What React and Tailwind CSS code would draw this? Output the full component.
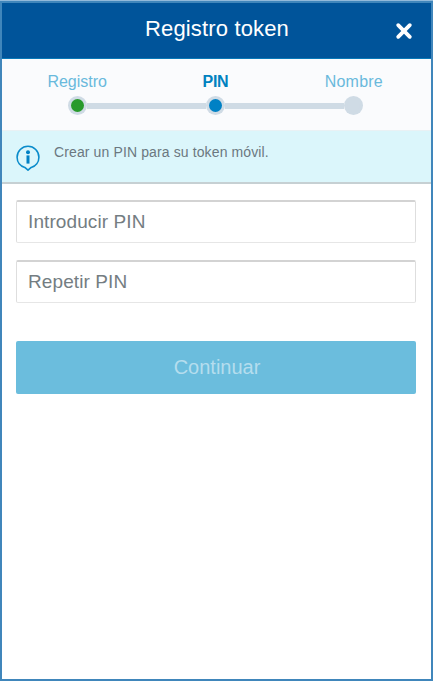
const steps = [
  { label: 'Registro', text: 'text-[#69b9dc]', dot: 'bg-[#289a2c]' },
  { label: 'PIN', text: 'font-bold text-[#0081c0] tracking-[-0.3px]', dot: 'bg-[#0081c5]' },
  { label: 'Nombre', text: 'text-[#69b9dc] tracking-[0.2px]', dot: 'bg-[#cfdbe5]' },
];

function Header() {
  return (
    <header className="flex h-14 items-center border-b border-[#0878b8] bg-[#00549a] pl-[40px] text-white">
      <h1 className="flex-1 pr-[3px] pb-[3px] text-center text-[22px] leading-7 tracking-[0.15px]">Registro token</h1>
      <button aria-label="Cerrar" className="mr-[18px] flex h-[18px] w-[18px] items-center justify-center">
        <svg viewBox="0 0 18 18" className="h-[18px] w-[18px]" fill="none" stroke="currentColor" strokeWidth="3.8" strokeLinecap="round">
          <path d="M3.2 3.2 14.8 14.8M14.8 3.2 3.2 14.8" />
        </svg>
      </button>
    </header>
  );
}

function Stepper() {
  return (
    <section className="h-[71px] bg-[#fafbfd] pt-[13px] pr-2 pl-[6px]">
      <ol className="grid grid-cols-3">
        {steps.map((step, i) => (
          <li key={step.label} className="flex flex-col items-center">
            <span className={`text-base leading-5 ${step.text}`}>{step.label}</span>
            <div className="mt-[4px] flex w-full items-center">
              <span className={`h-1.5 flex-1 ${i > 0 ? 'bg-[#cfdbe5]' : ''}`} />
              <span className="flex h-[19px] w-[19px] items-center justify-center rounded-full bg-[#cfdbe5]">
                <span className={`h-[13px] w-[13px] rounded-full ${step.dot}`} />
              </span>
              <span className={`h-1.5 flex-1 ${i < 2 ? 'bg-[#cfdbe5]' : ''}`} />
            </div>
          </li>
        ))}
      </ol>
    </section>
  );
}

function InfoBanner() {
  return (
    <section className="flex h-[54px] items-start border-t border-b-2 border-t-[#e9f1f4] border-b-[#c6d0d3] bg-[#dbf6fb] pl-3.5">
      <svg viewBox="0 0 24 27" className="mt-3.5 h-[27px] w-6 shrink-0" fill="none">
        <path
          d="M12 25.2 8.8 22.4C4.3 21.1 1.1 17.1 1.1 12.2 1.1 6.2 6 1.3 12 1.3s10.9 4.9 10.9 10.9c0 4.9-3.2 8.9-7.7 10.2L12 25.2Z"
          stroke="#0b8ccb"
          strokeWidth="1.6"
          strokeLinejoin="round"
        />
        <circle cx="12" cy="7.2" r="2" fill="#0081c5" />
        <path d="M12 10.4v8.2" stroke="#0081c5" strokeWidth="3" />
      </svg>
      <p className="mt-[11px] ml-[14px] text-sm leading-5 tracking-[0.12px] text-[#6b7880]">Crear un PIN para su token móvil.</p>
    </section>
  );
}

function PinField({ placeholder }) {
  return (
    <input
      type="text"
      placeholder={placeholder}
      className="block h-[43px] w-full rounded-[2px] border border-t-2 border-[#dedede] border-t-[#d3d3d3] border-b-[#e6e6e6] bg-white px-[11px] pb-px text-[19px] tracking-[0.1px] outline-none placeholder:text-[#747d82]"
    />
  );
}

export default function App() {
  return (
    <div className="h-[681px] w-[434px] bg-white font-['Liberation_Sans',Arial,sans-serif]">
      <div className="h-full w-[433px] border-t border-[#91b9da]">
        <main className="h-full border-2 border-[#4086bb] bg-white">
          <Header />
          <Stepper />
          <InfoBanner />
          <form className="pt-4 pr-[15px] pl-3.5">
            <div className="flex flex-col gap-[17px]">
              <PinField placeholder="Introducir PIN" />
              <PinField placeholder="Repetir PIN" />
            </div>
            <button type="button" className="mt-[38px] h-[53px] w-full rounded-[2px] bg-[#6bbddd] pb-px pl-[2px] text-[20px] text-[#b5ddee]">
              Continuar
            </button>
          </form>
        </main>
      </div>
    </div>
  );
}
